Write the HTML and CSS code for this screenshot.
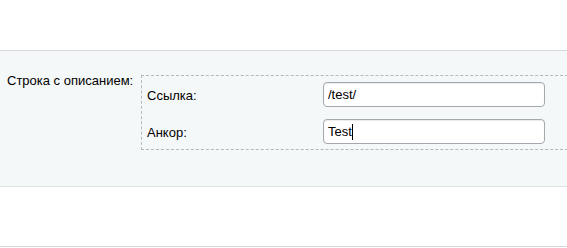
FILE: index.html
```html
<!DOCTYPE html>
<html lang="ru">
<head>
    <meta charset="UTF-8">
    <meta name="viewport" content="width=device-width, initial-scale=1.0">
    <title>Строка с описанием</title>
    <link rel="stylesheet" href="styles.css">
</head>
<body>
    <div class="top"></div>
    <div class="panel">
        <div class="row">
            <div class="row-label">Строка с описанием:</div>
            <div class="group">
                <div class="field">
                    <label class="field-label">Ссылка:</label>
                    <div class="input">/test/</div>
                </div>
                <div class="field">
                    <label class="field-label">Анкор:</label>
                    <div class="input">Test<span class="caret"></span></div>
                </div>
            </div>
        </div>
    </div>
    <div class="bottom"></div>
</body>
</html>
```

FILE: styles.css
```css
body {
    margin: 0;
    font-family: 'Liberation Sans', Arial, sans-serif;
    font-size: 13px;
    color: #000;
    background: #fff;
    overflow: hidden;
}
.top {
    height: 50px;
}
.panel {
    background: #f5f8f9;
    border-top: 1px solid #d3d9dc;
    border-bottom: 1px solid #dde4e6;
    padding: 24px 0 36px 7px;
    overflow: hidden;
}
.row {
    display: flex;
    align-items: flex-start;
}
.row-label {
    width: 134px;
    flex-shrink: 0;
    line-height: 15px;
    margin-top: -2px;
}
.group {
    flex-shrink: 0;
    width: 460px;
    border: 1px dashed #b3b8bb;
    padding: 6px 5px 5px 5px;
    display: flex;
    flex-direction: column;
    gap: 12px;
}
.field {
    display: flex;
    align-items: center;
}
.field-label {
    width: 176px;
    padding-top: 2px;
}
.input {
    box-sizing: border-box;
    width: 222px;
    height: 25px;
    line-height: 23px;
    padding: 0 4px;
    border: 1px solid #a3a9ae;
    border-radius: 4px;
    background: #fff;
    box-shadow: inset 0 1px 1px rgba(0, 0, 0, 0.08);
    font-size: 13px;
}
.caret {
    display: inline-block;
    width: 1px;
    height: 16px;
    background: #000;
    vertical-align: -4px;
}
.bottom {
    height: 59px;
    border-bottom: 1px solid #d0d8d8;
}
```
